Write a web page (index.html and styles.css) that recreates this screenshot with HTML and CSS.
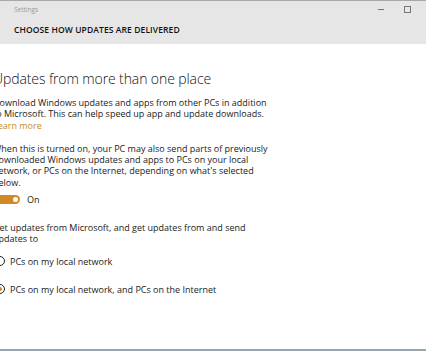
FILE: index.html
```html
<!DOCTYPE html>
<html lang="en">
<head>
    <meta charset="UTF-8">
    <title>Settings</title>
    <link rel="stylesheet" href="styles.css">
</head>
<body>
    <header class="titlebar">
        <div class="titlerow">
            <span class="apptitle">Settings</span>
            <div class="winbuttons">
                <span class="minimize"></span>
                <span class="maximize"></span>
            </div>
        </div>
        <h1 class="pagetitle">CHOOSE HOW UPDATES ARE DELIVERED</h1>
    </header>

    <main class="content">
        <h2>Updates from more than one place</h2>
        <p>Download Windows updates and apps from other PCs in addition<br>to Microsoft. This can help speed up app and update downloads.<br><a class="learn" href="#">Learn more</a></p>

        <p>When this is turned on, your PC may also send parts of previously<br>downloaded Windows updates and apps to PCs on your local<br>network, or PCs on the Internet, depending on what's selected<br>below.</p>

        <label class="toggle">
            <span class="switch"><span class="knob"></span></span>
            <span>On</span>
        </label>

        <p>Get updates from Microsoft, and get updates from and send<br>updates to</p>

        <div class="radios">
            <label class="radio">
                <span class="circle"></span>
                <span>PCs on my local network</span>
            </label>
            <label class="radio checked">
                <span class="circle"></span>
                <span>PCs on my local network, and PCs on the Internet</span>
            </label>
        </div>
    </main>
</body>
</html>
```

FILE: styles.css
```css
html, body {
    height: 100%;
}

body {
    margin: 0;
    font-family: 'Open Sans', 'Noto Sans', sans-serif;
    color: #1a1a1a;
    background: #fff;
    border-top: 1px solid #a8a8a8;
    border-bottom: 2px solid #9aa6ad;
    box-sizing: border-box;
    overflow: hidden;
}

.titlebar {
    background: #e6e6e6;
    height: 43px;
    padding: 0 0 0 14px;
}

.titlerow {
    display: flex;
    justify-content: space-between;
    align-items: center;
    height: 17px;
}

.apptitle {
    font-size: 6.5px;
    color: #9a9a9a;
}

.winbuttons {
    display: flex;
    align-items: center;
    gap: 20px;
    padding-right: 15px;
}

.minimize {
    width: 6px;
    height: 1px;
    background: #777;
}

.maximize {
    width: 5px;
    height: 5px;
    border: 1px solid #777;
}

.pagetitle {
    margin: 6px 0 0 0;
    font-size: 8.5px;
    font-weight: 600;
    color: #111;
    letter-spacing: 0.1px;
}

.content {
    margin-left: -7px;
    padding-top: 25px;
}

h2 {
    margin: 0 0 9px 0;
    font-size: 14px;
    font-weight: 300;
    letter-spacing: -0.1px;
    color: #111;
}

p {
    margin: 0 0 12px 0;
    font-size: 9px;
    line-height: 11.3px;
}

.learn {
    color: #c58b2b;
    text-decoration: none;
}

.toggle {
    display: flex;
    align-items: center;
    gap: 7px;
    font-size: 9px;
    margin: -7px 0 16px -4px;
}

.switch {
    width: 29px;
    height: 9px;
    border-radius: 5px;
    background: #cf8a26;
    display: flex;
    justify-content: flex-end;
    align-items: center;
    padding-right: 2px;
}

.knob {
    width: 5px;
    height: 5px;
    border-radius: 50%;
    background: #fff;
}

.radios {
    display: flex;
    flex-direction: column;
    gap: 15px;
    margin-top: -2px;
}

.radio {
    display: flex;
    align-items: center;
    gap: 5px;
    font-size: 9px;
    margin-left: 2px;
}

.circle {
    width: 8px;
    height: 8px;
    border: 1.3px solid #222;
    border-radius: 50%;
    display: flex;
    align-items: center;
    justify-content: center;
}

.checked .circle::after {
    content: "";
    width: 4px;
    height: 4px;
    border-radius: 50%;
    background: #cf8a26;
}
```
